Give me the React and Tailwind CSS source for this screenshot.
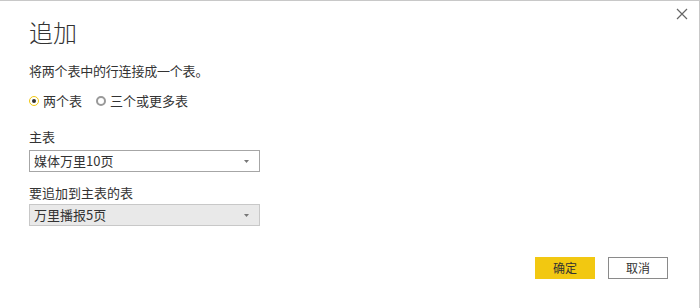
export default function App() {
  return (
    <div
      className="relative w-[700px] h-[308px] bg-white border-t border-r border-[#c8c8c8] text-[#333] overflow-hidden"
      style={{ fontFamily: '"Segoe UI", "Noto Sans CJK SC", sans-serif' }}
    >
      <button className="absolute right-[11px] top-[7px] w-[12px] h-[12px] text-[#666]">
        <svg width="12" height="12" viewBox="0 0 12 12" stroke="currentColor" strokeWidth="1.2" fill="none">
          <path d="M1 1L11 11M11 1L1 11" />
        </svg>
      </button>

      <div className="pl-[29px] pt-[14px] flex flex-col">
        <h1 className="text-[24px] leading-[34px] font-light text-[#333]">追加</h1>
        <p className="mt-[13px] text-[13px] leading-[18px] tracking-[-0.2px]">将两个表中的行连接成一个表。</p>

        <div className="mt-[12px] flex items-center text-[13px] leading-[18px]">
          <span className="w-[10px] h-[10px] rounded-full border-[1.5px] border-[#f2c811] flex items-center justify-center mr-[4px]">
            <span className="w-[4px] h-[4px] rounded-full bg-[#333]" />
          </span>
          <span>两个表</span>
          <span className="ml-[14px] w-[10px] h-[10px] rounded-full border-2 border-[#999] mr-[4px]" />
          <span>三个或更多表</span>
        </div>

        <label className="mt-[18px] text-[13px] leading-[18px]">主表</label>
        <div className="mt-[4px] w-[231px] h-[22px] border border-[#a6a6a6] bg-white flex items-center justify-between pl-[4px] pr-[10px] text-[13px]">
          <span>媒体万里10页</span>
          <svg width="5" height="3" viewBox="0 0 5 3"><path d="M0 0H5L2.5 3Z" fill="#777" /></svg>
        </div>

        <label className="mt-[12px] text-[13px] leading-[18px]">要追加到主表的表</label>
        <div className="mt-[2px] w-[231px] h-[22px] border border-[#c8c8c8] bg-[#e9e9e9] flex items-center justify-between pl-[4px] pr-[10px] text-[13px]">
          <span>万里播报5页</span>
          <svg width="5" height="3" viewBox="0 0 5 3"><path d="M0 0H5L2.5 3Z" fill="#777" /></svg>
        </div>
      </div>

      <div className="absolute right-[31px] bottom-[29px] flex gap-[13px] text-[12px]">
        <button className="w-[60px] h-[22px] bg-[#f2c811] text-[#333]">确定</button>
        <button className="w-[60px] h-[22px] border border-[#8a8a8a] bg-white text-[#333]">取消</button>
      </div>
    </div>
  );
}
